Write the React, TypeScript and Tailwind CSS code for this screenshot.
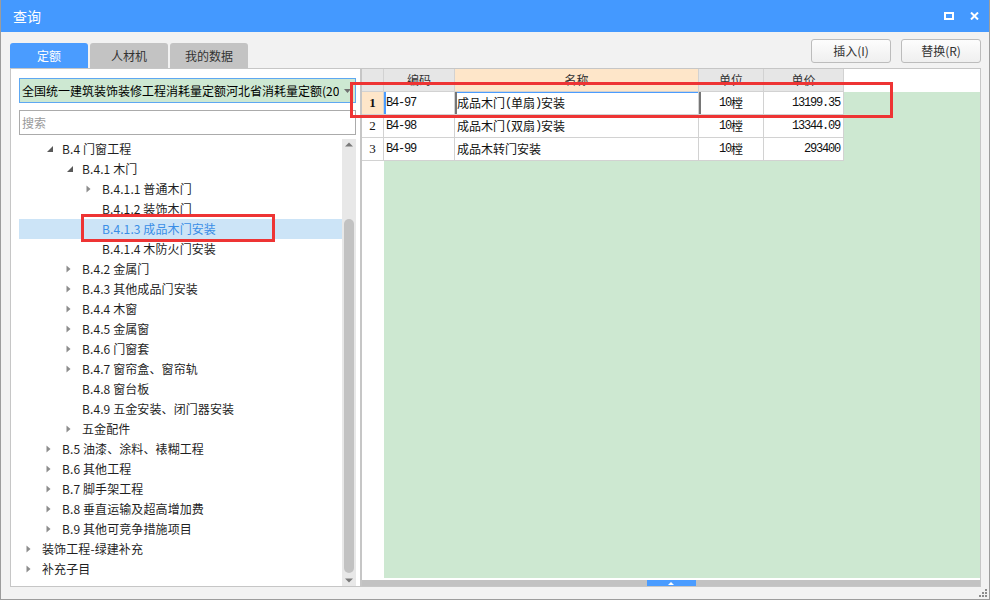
import React from 'react';

type TreeNode = { lv: number; icon?: 'open' | 'closed'; text: string; selected?: boolean };

const tree: TreeNode[] = [
  { lv: 1, icon: 'open', text: 'B.4 门窗工程' },
  { lv: 2, icon: 'open', text: 'B.4.1 木门' },
  { lv: 3, icon: 'closed', text: 'B.4.1.1 普通木门' },
  { lv: 3, text: 'B.4.1.2 装饰木门' },
  { lv: 3, text: 'B.4.1.3 成品木门安装', selected: true },
  { lv: 3, text: 'B.4.1.4 木防火门安装' },
  { lv: 2, icon: 'closed', text: 'B.4.2 金属门' },
  { lv: 2, icon: 'closed', text: 'B.4.3 其他成品门安装' },
  { lv: 2, icon: 'closed', text: 'B.4.4 木窗' },
  { lv: 2, icon: 'closed', text: 'B.4.5 金属窗' },
  { lv: 2, icon: 'closed', text: 'B.4.6 门窗套' },
  { lv: 2, icon: 'closed', text: 'B.4.7 窗帘盒、窗帘轨' },
  { lv: 2, text: 'B.4.8 窗台板' },
  { lv: 2, text: 'B.4.9 五金安装、闭门器安装' },
  { lv: 2, icon: 'closed', text: '五金配件' },
  { lv: 1, icon: 'closed', text: 'B.5 油漆、涂料、裱糊工程' },
  { lv: 1, icon: 'closed', text: 'B.6 其他工程' },
  { lv: 1, icon: 'closed', text: 'B.7 脚手架工程' },
  { lv: 1, icon: 'closed', text: 'B.8 垂直运输及超高增加费' },
  { lv: 1, icon: 'closed', text: 'B.9 其他可竞争措施项目' },
  { lv: 0, icon: 'closed', text: '装饰工程-绿建补充' },
  { lv: 0, icon: 'closed', text: '补充子目' },
];

const indent = ['pl-[8px]', 'pl-[28px]', 'pl-[48px]', 'pl-[68px]'];

const rows = [
  { n: '1', code: 'B4-97', name: '成品木门(单扇)安装', unit: '10樘', price: '13199.35' },
  { n: '2', code: 'B4-98', name: '成品木门(双扇)安装', unit: '10樘', price: '13344.09' },
  { n: '3', code: 'B4-99', name: '成品木转门安装', unit: '10樘', price: '293400' },
];

// SimSun-like look: CJK runs in Noto CJK, ASCII runs half width in mono
function Mixed({ text }: { text: string }) {
  const parts = text.match(/[\u4e00-\u9fff]+|[^\u4e00-\u9fff]+/g) || [];
  return (
    <>
      {parts.map((p, i) =>
        /[\u4e00-\u9fff]/.test(p) ? (
          <span key={i} className="text-[12px]">{p}</span>
        ) : (
          <span key={i} className="font-['Liberation_Mono',monospace] text-[12px] tracking-[-1.2px]">{p}</span>
        )
      )}
    </>
  );
}

function Arrow({ icon }: { icon?: 'open' | 'closed' }) {
  if (icon === 'open')
    return (
      <svg width="6" height="6" viewBox="0 0 6 6">
        <polygon points="6,0 6,6 0,6" fill="#595959" />
      </svg>
    );
  if (icon === 'closed')
    return (
      <svg width="5" height="8" viewBox="0 0 5 8" className="-ml-px">
        <polygon points="0.5,0.5 4.5,4 0.5,7.5" fill="#8c8c8c" />
      </svg>
    );
  return null;
}

function Tree() {
  return (
    <div className="flex flex-1 min-h-0 mt-[4px]">
      <div className="flex-1 overflow-hidden">
        {tree.map((node, i) => (
          <div
            key={i}
            className={`relative flex h-[20px] items-center ${indent[node.lv]} ${node.selected ? 'bg-[#cce4f7] text-[#3a8ee6]' : 'text-[#1f1f1f]'}`}
          >
            <span className="flex w-[15px] shrink-0 items-center">
              <Arrow icon={node.icon} />
            </span>
            <span className="whitespace-nowrap text-[12px] tracking-[0.1px]">{node.text}</span>
            {node.selected && (
              <span className="absolute left-[62px] top-[-5px] h-[28px] w-[194px] border-[3px] border-[#ee3434]" />
            )}
          </div>
        ))}
      </div>
      <div className="flex w-[14px] shrink-0 flex-col items-center bg-[#e8e8e8]">
        <svg width="8" height="5" viewBox="0 0 8 5" className="mt-[3px]">
          <polygon points="0,4.5 4,0.5 8,4.5" fill="#7a7a7a" />
        </svg>
        <div className="mt-[72px] w-[10px] h-[354px] rounded-full bg-[#c2c2c2]" />
        <svg width="8" height="5" viewBox="0 0 8 5" className="mt-[5px]">
          <polygon points="0,0.5 4,4.5 8,0.5" fill="#7a7a7a" />
        </svg>
      </div>
    </div>
  );
}

function LeftPanel() {
  return (
    <div className="flex w-[351px] shrink-0 flex-col">
      <div className="mt-[11px] flex h-[25px] gap-[2px]">
        <div className="flex w-[78px] items-center justify-center rounded-t-[3px] bg-[#4a9cff] text-[12px] text-white">定额</div>
        <div className="flex w-[78px] items-center justify-center rounded-t-[3px] bg-[#c3c3c3] text-[12px] text-[#333]">人材机</div>
        <div className="flex w-[78px] items-center justify-center rounded-t-[3px] bg-[#c3c3c3] text-[12px] text-[#333]">我的数据</div>
      </div>
      <div className="flex flex-1 min-h-0 flex-col border border-[#c6c6c6] bg-white pl-[8px] pr-[4px]">
        <div className="mt-[9px] flex h-[25px] shrink-0 items-center border border-[#5ea8f2] bg-[#cde8d2]">
          <div className="flex-1 overflow-hidden whitespace-nowrap pl-[2px] text-[12px] text-black">
            全国统一建筑装饰装修工程消耗量定额河北省消耗量定额(2012)
          </div>
          <div className="flex w-[16px] shrink-0 justify-center">
            <svg width="7" height="4" viewBox="0 0 7 4">
              <polygon points="0,0 7,0 3.5,4" fill="#707070" />
            </svg>
          </div>
        </div>
        <div className="mt-[7px] flex h-[25px] shrink-0 items-center border border-[#ababab] bg-white pl-[2px] text-[12px] text-[#9a9a9a]">
          搜索
        </div>
        <Tree />
      </div>
    </div>
  );
}

const cellBase = 'flex h-full items-center border-r border-b border-[#d2d2d2]';

function RightPanel() {
  return (
    <div className="flex flex-1 flex-col">
      <div className="mt-[7px] mb-[5px] flex h-[24px] justify-end gap-[10px]">
        <button className="w-[80px] rounded-[3px] border border-[#bcbcbc] bg-gradient-to-b from-[#fdfdfd] to-[#efefef] text-[12px] text-[#333]">插入(I)</button>
        <button className="w-[80px] rounded-[3px] border border-[#bcbcbc] bg-gradient-to-b from-[#fdfdfd] to-[#efefef] text-[12px] text-[#333]">替换(R)</button>
      </div>
      <div className="relative flex flex-1 min-h-0 flex-col border border-[#c6c6c6] bg-white">
        <div className="flex h-[23px] shrink-0 text-[12px] text-[#333]">
          <div className={`${cellBase} w-[22px] bg-[#e6e6e6]`} />
          <div className={`${cellBase} w-[71px] justify-center bg-[#e6e6e6]`}>编码</div>
          <div className={`${cellBase} w-[244px] justify-center bg-[#fee6c9]`}>名称</div>
          <div className={`${cellBase} w-[65px] justify-center bg-[#e6e6e6]`}>单位</div>
          <div className={`${cellBase} w-[80px] justify-center bg-[#e6e6e6]`}>单价</div>
          <div className="flex-1" />
        </div>
        {rows.map((r, i) => {
          const first = i === 0;
          return (
            <div key={r.n} className="flex h-[23px] shrink-0 text-[#111]">
              <div
                className={`${cellBase} w-[22px] justify-center font-['Liberation_Serif',serif] text-[13px] ${first ? 'bg-[#fee6c9] font-bold' : 'bg-white'}`}
              >
                {r.n}
              </div>
              <div className={`${cellBase} w-[71px] pl-[2px] ${first ? 'shadow-[inset_2px_0_0_#4a9cff]' : ''}`}>
                <Mixed text={r.code} />
              </div>
              <div className={`${cellBase} w-[244px] pl-[2px] ${first ? 'shadow-[inset_2px_0_0_#767676,inset_0_1px_0_#4a9cff]' : ''}`}>
                <Mixed text={r.name} />
              </div>
              <div className={`${cellBase} w-[65px] justify-center ${first ? 'shadow-[inset_2px_0_0_#767676]' : ''}`}>
                <Mixed text={r.unit} />
              </div>
              <div className={`${cellBase} w-[80px] justify-end pr-[3px]`}>
                <Mixed text={r.price} />
              </div>
              <div className="flex-1 bg-[#cde8d1]" />
            </div>
          );
        })}
        <div className="flex flex-1 min-h-0">
          <div className="w-[22px] bg-white" />
          <div className="flex-1 bg-[#cde8d1]" />
        </div>
        <div className="h-[2px] shrink-0 bg-white" />
        <div className="flex h-[6px] shrink-0 justify-center bg-[#c2c2c2]">
          <div className="flex w-[49px] items-center justify-center bg-[#4a9cff]">
            <svg width="6" height="3" viewBox="0 0 6 3">
              <polygon points="0,3 3,0 6,3" fill="#ffffff" />
            </svg>
          </div>
        </div>
        <span className="absolute left-[-12px] top-[13px] h-[36px] w-[543px] border-[3px] border-[#ee3434]" />
      </div>
    </div>
  );
}

export default function App() {
  return (
    <div className="flex h-[600px] w-[990px] flex-col border-x border-b border-[#9c9c9c] bg-[#f2f2f2] font-['Noto_Sans_CJK_SC','Noto_Sans',sans-serif]">
      <div className="flex h-[32px] shrink-0 items-center bg-[#4499ff] pl-[12px] pr-[10px] text-white">
        <span className="text-[14px]">查询</span>
        <div className="ml-auto flex items-center gap-[16px]">
          <svg width="10" height="8" viewBox="0 0 10 8">
            <rect x="1" y="1" width="8" height="6" fill="none" stroke="#ffffff" strokeWidth="2" />
          </svg>
          <svg width="9" height="8" viewBox="0 0 9 8">
            <path d="M1 0.5 L8 7.5 M8 0.5 L1 7.5" stroke="#ffffff" strokeWidth="2" />
          </svg>
        </div>
      </div>
      <div className="flex flex-1 min-h-0 pl-[9px] pr-[8px]">
        <LeftPanel />
        <RightPanel />
      </div>
      <div className="flex h-[12px] shrink-0 items-end justify-end pr-[2px] pb-[2px]">
        <svg width="8" height="8" viewBox="0 0 8 8">
          <rect x="6" y="0" width="2" height="2" fill="#8c8c8c" />
          <rect x="3" y="3" width="2" height="2" fill="#8c8c8c" />
          <rect x="6" y="3" width="2" height="2" fill="#8c8c8c" />
          <rect x="0" y="6" width="2" height="2" fill="#8c8c8c" />
          <rect x="3" y="6" width="2" height="2" fill="#8c8c8c" />
          <rect x="6" y="6" width="2" height="2" fill="#8c8c8c" />
        </svg>
      </div>
    </div>
  );
}
